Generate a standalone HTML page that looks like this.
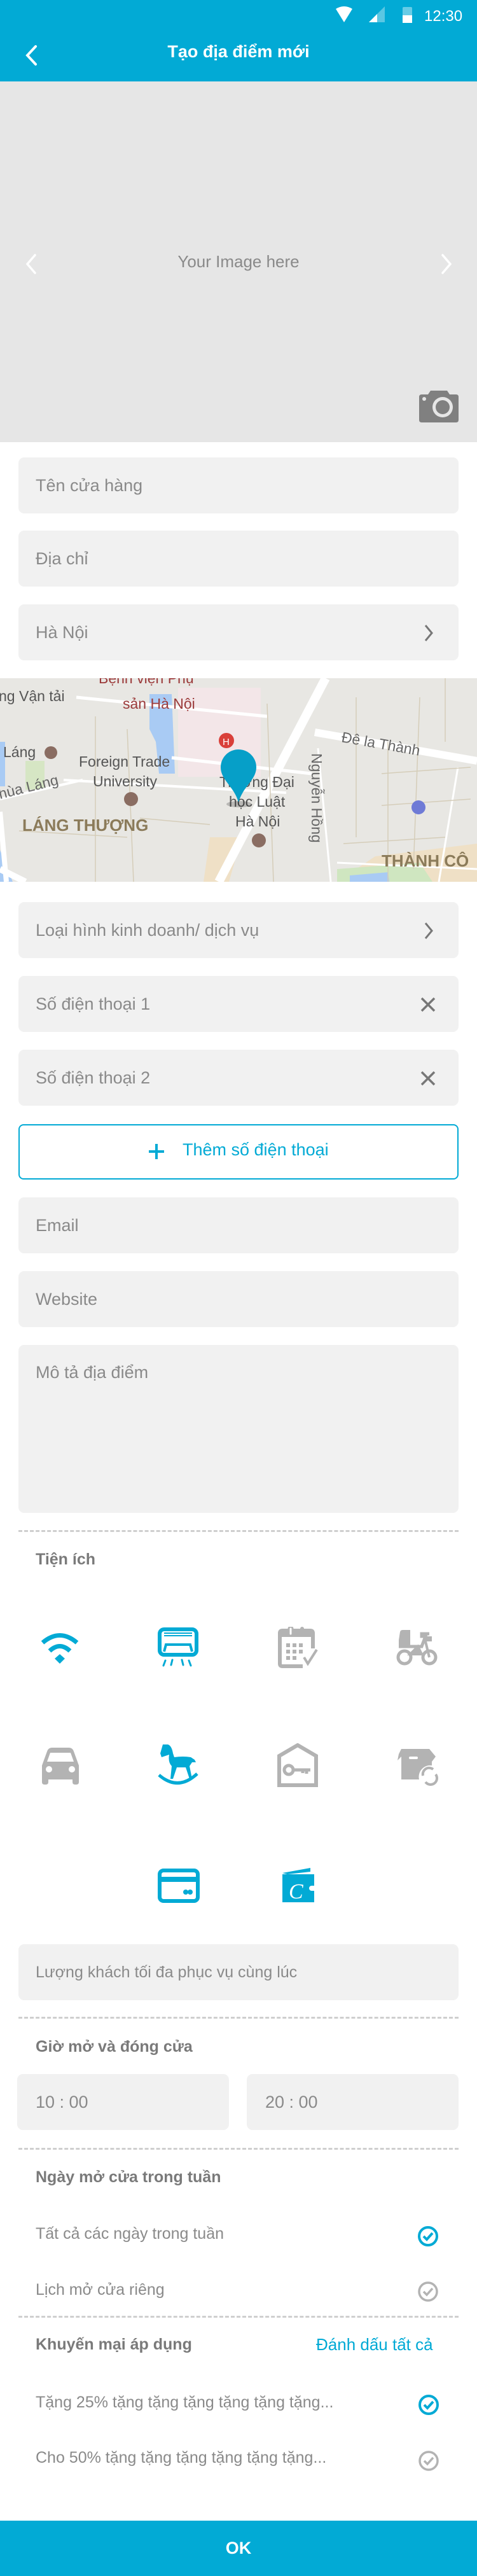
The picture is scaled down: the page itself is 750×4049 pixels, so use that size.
<!DOCTYPE html>
<html><head><meta charset="utf-8">
<style>
*{margin:0;padding:0;box-sizing:border-box}
body{width:750px;height:4049px;position:relative;background:#fff;font-family:"Liberation Sans",sans-serif;overflow:hidden}
.a{position:absolute}
.f{position:absolute;left:29px;width:692px;height:88px;background:#f1f1f1;border-radius:9px}
.f span{position:absolute;left:27px;top:0;line-height:88px;font-size:27px;color:#8a8a8a}
.dash{position:absolute;left:29px;width:692px;height:0;border-top:3px dashed #cfcfcf}
.h{position:absolute;left:56px;font-size:25px;font-weight:bold;color:#7a7a7a}
.t{position:absolute;left:56px;font-size:25px;color:#8a8a8a}
</style></head><body>
<div class="a" style="left:0;top:0;width:750px;height:128px;background:#02aad5"></div>
<svg class="a" style="left:525px;top:8px" width="220" height="30">
 <path d="M3 6 Q16 -2 29 6 L16 27 Z" fill="#fff"/>
 <path d="M55 27 L80 2 L80 27 Z" fill="#fff" opacity="0.35"/><path d="M55 27 L68 14 L68 27 Z" fill="#fff"/>
 <rect x="108" y="3" width="15" height="25" rx="2" fill="#fff" opacity="0.4"/><rect x="108" y="16" width="15" height="12" fill="#fff"/>
 <text x="142" y="25" font-size="24" fill="#fff" font-family="Liberation Sans">12:30</text>
</svg>
<svg class="a" style="left:38px;top:70px" width="24" height="34"><path d="M18 3 L5 17 L18 31" stroke="#fff" stroke-width="4" fill="none" stroke-linecap="round"/></svg>
<div class="a" style="left:0;width:750px;top:66px;text-align:center;font-size:27px;font-weight:bold;color:#fff">Tạo địa điểm mới</div>
<div class="a" style="left:0;top:128px;width:750px;height:567px;background:#e6e6e6"></div>
<svg class="a" style="left:38px;top:398px" width="24" height="34"><path d="M17 3 L5 17 L17 31" stroke="#fff" stroke-width="3.5" fill="none" stroke-linecap="round"/></svg>
<svg class="a" style="left:690px;top:398px" width="24" height="34"><path d="M6 3 L18 17 L6 31" stroke="#fff" stroke-width="3.5" fill="none" stroke-linecap="round"/></svg>
<div class="a" style="left:0;width:750px;top:396px;text-align:center;font-size:26px;color:#8a8a8a">Your Image here</div>
<svg class="a" style="left:657px;top:612px" width="66" height="54"><path d="M2 12 Q2 8 6 8 L16 8 L20 2 L46 2 L50 8 L60 8 Q64 8 64 12 L64 48 Q64 52 60 52 L6 52 Q2 52 2 48 Z" fill="#808080"/><circle cx="39" cy="28" r="16" fill="#e6e6e6"/><circle cx="39" cy="28" r="11" fill="#808080"/><circle cx="10" cy="15" r="3" fill="#e6e6e6"/></svg>
<div class="f" style="top:719px"><span>Tên cửa hàng</span></div>
<div class="f" style="top:834px"><span>Địa chỉ</span></div>
<div class="f" style="top:950px"><span>Hà Nội</span><svg class="a" style="left:635px;top:30px" width="20" height="30"><path d="M5 3 L15 15 L5 27" stroke="#777" stroke-width="3" fill="none"/></svg></div>
<svg class="a" style="left:0;top:1066px" width="750" height="320">
 <rect width="750" height="320" fill="#e8e7e3"/>
 <rect x="280" y="15" width="130" height="140" fill="#f3e6e8"/>
 <path d="M235 25 L270 25 L275 150 L250 150 L245 100 L235 80 Z" fill="#a9cbf4"/>
 <rect x="0" y="100" width="8" height="70" fill="#a9cbf4"/>
 <path d="M0 270 L20 320 L0 320Z" fill="#a9cbf4"/>
 <path d="M40 130 L70 130 L70 175 L40 175Z" fill="#d6e6c4"/>
 <path d="M590 280 L670 270 L750 260 L750 320 L530 320Z" fill="#efe0c6"/>
 <path d="M530 300 L660 290 L680 320 L530 320Z" fill="#cfe6c0"/>
 <path d="M550 310 L610 305 L612 320 L550 320Z" fill="#a9cbf4"/>
 <path d="M330 250 L380 250 L360 320 L320 320Z" fill="#efe0c6"/>
 <g stroke="#fff" fill="none">
  <path d="M512 0 L344 320" stroke-width="14"/>
  <path d="M495 85 L750 130" stroke-width="12"/>
  <path d="M0 300 L40 320" stroke-width="10"/>
  <path d="M0 210 L10 320" stroke-width="8"/>
  <path d="M120 30 L420 60" stroke-width="5"/>
  <path d="M270 125 L490 150" stroke-width="5"/>
  <path d="M100 160 L450 180" stroke-width="4"/>
  <path d="M0 190 L130 160" stroke-width="4"/>
  <path d="M500 110 L520 320" stroke-width="3"/>
  <path d="M720 140 L690 320" stroke-width="3"/>
  <path d="M530 290 L750 300" stroke-width="3"/>
 </g>
 <g stroke="#d5cdb9" stroke-width="1.5" fill="none">
  <path d="M150 60 L150 320 M200 80 L210 320 M420 40 L430 320 M560 30 L560 250 M600 150 L740 140 M600 200 L740 190 M610 100 L610 320 M660 30 L650 300 M30 240 L200 250 M220 220 L330 230 M700 0 L700 100 M540 260 L700 250"/>
 </g>
 <g font-family="Liberation Sans" font-size="23">
  <text x="-2" y="36" fill="#555">ng Vận tải</text>
  <text x="155" y="8" fill="#9b3a3a">Bệnh viện Phụ</text>
  <text x="193" y="48" fill="#9b3a3a">sản Hà Nội</text>
  <text x="5" y="124" fill="#555">Láng</text>
  <text x="124" y="139" fill="#555">Foreign Trade</text>
  <text x="146" y="170" fill="#555">University</text>
  <text x="0" y="190" fill="#666" transform="rotate(-14 0 190)">hùa Láng</text>
  <text x="345" y="171" fill="#555">Trường Đại</text>
  <text x="360" y="202" fill="#555">học Luật</text>
  <text x="370" y="233" fill="#555">Hà Nội</text>
  <text x="536" y="100" fill="#666" transform="rotate(10 536 100)">Đê la Thành</text>
  <text x="490" y="118" fill="#666" transform="rotate(90 490 118)">Nguyễn Hồng</text>
  <text x="35" y="240" fill="#8b7b5a" font-weight="bold" font-size="26">LÁNG THƯỢNG</text>
  <text x="600" y="296" fill="#8b7b5a" font-weight="bold" font-size="26">THÀNH CÔ</text>
 </g>
 <circle cx="356" cy="98" r="12" fill="#d9403a"/><text x="350" y="105" font-size="15" fill="#fff" font-family="Liberation Sans">H</text>
 <circle cx="80" cy="117" r="10" fill="#8a6d62"/>
 <circle cx="206" cy="190" r="11" fill="#8a6d62"/>
 <circle cx="407" cy="255" r="11" fill="#8a6d62"/>
 <circle cx="658" cy="203" r="11" fill="#6f7bd6"/>
 <ellipse cx="376" cy="198" rx="20" ry="5" fill="#000" opacity="0.2"/>
 <path d="M375 195 C368 170 347 160 347 140 A28 28 0 0 1 403 140 C403 160 382 170 375 195 Z" fill="#069fc8"/>
</svg>
<div class="f" style="top:1418px"><span>Loại hình kinh doanh/ dịch vụ</span><svg class="a" style="left:635px;top:30px" width="20" height="30"><path d="M5 3 L15 15 L5 27" stroke="#777" stroke-width="3" fill="none"/></svg></div>
<div class="f" style="top:1534px"><span>Số điện thoại 1</span><svg class="a" style="left:631px;top:32px" width="26" height="26"><path d="M3 3 L23 23 M23 3 L3 23" stroke="#777" stroke-width="3.5"/></svg></div>
<div class="f" style="top:1650px"><span>Số điện thoại 2</span><svg class="a" style="left:631px;top:32px" width="26" height="26"><path d="M3 3 L23 23 M23 3 L3 23" stroke="#777" stroke-width="3.5"/></svg></div>
<div class="a" style="left:29px;top:1767px;width:692px;height:87px;border:2px solid #02aad5;border-radius:8px"></div>
<svg class="a" style="left:233px;top:1797px" width="26" height="26"><path d="M13 1 V25 M1 13 H25" stroke="#02aad5" stroke-width="4"/></svg>
<div class="a" style="left:287px;top:1792px;font-size:27px;color:#02aad5">Thêm số điện thoại</div>
<div class="f" style="top:1882px"><span>Email</span></div>
<div class="f" style="top:1998px"><span>Website</span></div>
<div class="f" style="top:2114px;height:264px"><span style="line-height:1;top:30px">Mô tả địa điểm</span></div>
<div class="dash" style="top:2405px"></div>
<div class="h" style="top:2437px">Tiện ích</div>
<svg class="a" style="left:62px;top:2565px" width="66" height="50"><g fill="none" stroke="#02aad5" stroke-width="7"><path d="M5 17 Q32 -6 59 17"/><path d="M16 30 Q32 15 48 30"/></g><path d="M24 42 L32 35 L40 42 L32 50Z" fill="#02aad5"/></svg>
<svg class="a" style="left:248px;top:2558px" width="66" height="66"><rect x="3" y="3" width="58" height="40" rx="7" fill="none" stroke="#02aad5" stroke-width="6"/><path d="M10 9 H54 M10 13 H54" stroke="#02aad5" stroke-width="2"/><path d="M10 38 L13 27 H51 L54 38" fill="none" stroke="#02aad5" stroke-width="4"/><g stroke="#02aad5" stroke-width="3" stroke-linecap="round"><path d="M12 52 L9 60 M23 51 L21 59 M38 51 L40 59 M49 52 L52 60"/></g></svg>
<svg class="a" style="left:436px;top:2557px" width="66" height="66"><path d="M56 34 V10 Q56 6 52 6 H8 Q4 6 4 10 V58 Q4 62 8 62 H40" fill="none" stroke="#b3b3b3" stroke-width="6"/><rect x="4" y="6" width="52" height="10" fill="#b3b3b3"/><rect x="18" y="0" width="6" height="14" rx="3" fill="#fff" stroke="#b3b3b3" stroke-width="3"/><rect x="36" y="0" width="6" height="14" rx="3" fill="#b3b3b3"/><g fill="#b3b3b3"><rect x="14" y="26" width="6" height="6"/><rect x="24" y="26" width="6" height="6"/><rect x="34" y="26" width="6" height="6"/><rect x="14" y="36" width="6" height="6"/><rect x="24" y="36" width="6" height="6"/><rect x="34" y="36" width="6" height="6"/><rect x="14" y="46" width="6" height="6"/><rect x="24" y="46" width="6" height="6"/></g><path d="M42 48 L48 58 L62 36" fill="none" stroke="#b3b3b3" stroke-width="4"/></svg>
<svg class="a" style="left:623px;top:2560px" width="66" height="62"><path d="M4 18 L6 5 Q7 2 10 2 H22 L22 28 H4 Z" fill="#b3b3b3"/><path d="M4 28 H40 L46 12 H40 V8 H52" fill="none" stroke="#b3b3b3" stroke-width="5"/><rect x="44" y="12" width="12" height="8" fill="#b3b3b3"/><circle cx="13" cy="45" r="10" fill="none" stroke="#b3b3b3" stroke-width="5"/><circle cx="52" cy="45" r="10" fill="none" stroke="#b3b3b3" stroke-width="5"/><path d="M22 40 L34 28 L40 40 Z M46 20 L52 45" fill="#b3b3b3" stroke="#b3b3b3" stroke-width="4"/></svg>
<svg class="a" style="left:62px;top:2745px" width="66" height="62"><path d="M4 30 L12 8 Q14 2 20 2 H46 Q52 2 54 8 L62 30 V56 Q62 60 58 60 H56 Q52 60 52 56 V52 H14 V56 Q14 60 10 60 H8 Q4 60 4 56 Z" fill="#b3b3b3"/><path d="M12 24 L17 10 H49 L54 24 Z" fill="#fff"/><circle cx="15" cy="36" r="5" fill="#fff"/><circle cx="51" cy="36" r="5" fill="#fff"/></svg>
<svg class="a" style="left:248px;top:2740px" width="66" height="68"><path d="M8 2 L16 2 Q22 4 24 16 L26 22 Q40 20 52 22 L58 26 L60 30 L54 30 L50 36 L54 56 L50 56 L44 38 L30 38 L24 56 L20 56 L22 36 Q16 30 18 18 L12 20 L6 22 L4 16 Z" fill="#02aad5"/><path d="M2 50 Q32 76 62 48" fill="none" stroke="#02aad5" stroke-width="5"/></svg>
<svg class="a" style="left:436px;top:2740px" width="66" height="70"><path d="M3 66 V20 L32 3 L61 20 V66 Z" fill="none" stroke="#b3b3b3" stroke-width="6"/><circle cx="18" cy="42" r="7" fill="none" stroke="#b3b3b3" stroke-width="5"/><path d="M24 42 H52 M46 42 V48 M40 42 V47" stroke="#b3b3b3" stroke-width="5"/></svg>
<svg class="a" style="left:623px;top:2741px" width="66" height="66"><path d="M8 8 H52 L62 20 L56 28 L56 34 A18 18 0 0 0 36 56 H8 V20 L2 26 L4 16 Z" fill="#b3b3b3"/><rect x="20" y="20" width="14" height="4" rx="2" fill="#fff"/><g fill="none" stroke="#b3b3b3" stroke-width="4"><path d="M42 50 A10 10 0 0 1 58 40"/><path d="M62 48 A10 10 0 0 1 46 60"/></g></svg>
<svg class="a" style="left:248px;top:2937px" width="66" height="54"><rect x="3" y="3" width="60" height="48" rx="6" fill="none" stroke="#02aad5" stroke-width="6"/><rect x="3" y="13" width="60" height="8" fill="#02aad5"/><circle cx="44" cy="37" r="4" fill="#02aad5"/><circle cx="51" cy="37" r="4" fill="#02aad5"/></svg>
<svg class="a" style="left:442px;top:2932px" width="56" height="60"><path d="M2 12 L46 4 V10 L10 14 Z" fill="#02aad5"/><path d="M2 14 H52 V32 H48 A4 4 0 0 0 48 40 H52 V58 H2 Z" fill="#02aad5"/><text x="12" y="52" font-size="34" font-style="italic" fill="#fff" font-family="Liberation Serif">C</text></svg>
<div class="f" style="top:3056px"><span style="font-size:25px">Lượng khách tối đa phục vụ cùng lúc</span></div>
<div class="dash" style="top:3170px"></div>
<div class="h" style="top:3203px">Giờ mở và đóng cửa</div>
<div class="a" style="left:27px;top:3260px;width:333px;height:88px;background:#f1f1f1;border-radius:9px"><span style="position:absolute;left:29px;line-height:88px;font-size:27px;color:#8a8a8a">10 : 00</span></div>
<div class="a" style="left:388px;top:3260px;width:333px;height:88px;background:#f1f1f1;border-radius:9px"><span style="position:absolute;left:29px;line-height:88px;font-size:27px;color:#8a8a8a">20 : 00</span></div>
<div class="dash" style="top:3376px"></div>
<div class="h" style="top:3408px">Ngày mở cửa trong tuần</div>
<div class="t" style="top:3497px">Tất cả các ngày trong tuần</div>
<div class="t" style="top:3585px">Lịch mở cửa riêng</div>
<div class="dash" style="top:3640px"></div>
<div class="h" style="top:3671px">Khuyến mại áp dụng</div>
<div class="a" style="left:497px;top:3670px;font-size:26px;color:#02aad5">Đánh dấu tất cả</div>
<div class="t" style="top:3762px">Tặng 25% tặng tặng tặng tặng tặng tặng...</div>
<div class="t" style="top:3849px">Cho 50% tặng tặng tặng tặng tặng tặng...</div>
<svg class="a" style="left:655px;top:3497px" width="36" height="36"><circle cx="18" cy="18" r="14" fill="none" stroke="#02aad5" stroke-width="4"/><path d="M11 18 L16 23 L25 13" fill="none" stroke="#02aad5" stroke-width="4"/></svg>
<svg class="a" style="left:655px;top:3584px" width="36" height="36"><circle cx="18" cy="18" r="14" fill="none" stroke="#b3b3b3" stroke-width="3.5"/><path d="M11 18 L16 23 L25 13" fill="none" stroke="#b3b3b3" stroke-width="3.5"/></svg>
<svg class="a" style="left:656px;top:3762px" width="36" height="36"><circle cx="18" cy="18" r="14" fill="none" stroke="#02aad5" stroke-width="4"/><path d="M11 18 L16 23 L25 13" fill="none" stroke="#02aad5" stroke-width="4"/></svg>
<svg class="a" style="left:656px;top:3850px" width="36" height="36"><circle cx="18" cy="18" r="14" fill="none" stroke="#b3b3b3" stroke-width="3.5"/><path d="M11 18 L16 23 L25 13" fill="none" stroke="#b3b3b3" stroke-width="3.5"/></svg>
<div class="a" style="left:0;top:3962px;width:750px;height:87px;background:#02aad5;text-align:center;line-height:87px;font-size:27px;font-weight:bold;color:#fff">OK</div>
</body></html>
